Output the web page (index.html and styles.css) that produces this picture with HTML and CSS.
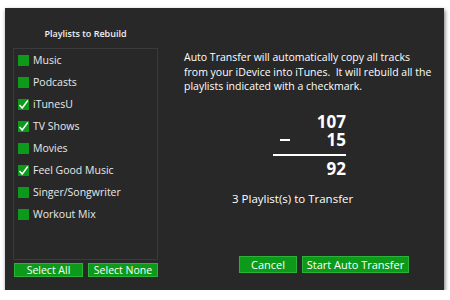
FILE: index.html
```html
<!DOCTYPE html>
<html>
<head>
<meta charset="utf-8">
<link rel="stylesheet" href="styles.css">
</head>
<body>
<div class="window">
  <div class="left">
    <div class="title">Playlists to Rebuild</div>
    <div class="list">
      <div class="item"><span class="box"></span>Music</div>
      <div class="item"><span class="box"></span>Podcasts</div>
      <div class="item"><span class="box"><svg viewBox="0 0 11 11"><polyline points="1.5,6 4.2,9 9.8,1.5"/></svg></span>iTunesU</div>
      <div class="item"><span class="box"><svg viewBox="0 0 11 11"><polyline points="1.5,6 4.2,9 9.8,1.5"/></svg></span>TV Shows</div>
      <div class="item"><span class="box"></span>Movies</div>
      <div class="item"><span class="box"><svg viewBox="0 0 11 11"><polyline points="1.5,6 4.2,9 9.8,1.5"/></svg></span>Feel Good Music</div>
      <div class="item"><span class="box"></span>Singer/Songwriter</div>
      <div class="item"><span class="box"></span>Workout Mix</div>
    </div>
    <div class="btnrow">
      <div class="btn sel-all">Select All</div>
      <div class="btn sel-none">Select None</div>
    </div>
  </div>
  <div class="right">
    <div class="desc">Auto Transfer will automatically copy all tracks from your iDevice into iTunes.&nbsp; It will rebuild all the playlists indicated with a checkmark.</div>
    <div class="calc">
      <div class="num">107</div>
      <div class="num minus-row"><span class="minus"></span>15</div>
      <div class="rule"></div>
      <div class="num">92</div>
    </div>
    <div class="count">3 Playlist(s) to Transfer</div>
    <div class="actions">
      <div class="btn cancel">Cancel</div>
      <div class="btn start">Start Auto Transfer</div>
    </div>
  </div>
</div>
</body>
</html>
```
FILE: styles.css
```css
html, body {
  margin: 0;
  padding: 0;
  background: #ffffff;
}
body {
  font-family: "Open Sans", "Noto Sans", sans-serif;
  color: #ffffff;
}
.window {
  margin: 8px 0 0 5px;
  width: 439px;
  height: 282px;
  background: #282828;
  box-shadow: 1px 2px 4px rgba(0,0,0,0.55);
  display: flex;
  box-sizing: border-box;
  padding: 0 8px;
}
.left {
  width: 145px;
  display: flex;
  flex-direction: column;
}
.title {
  padding-top: 20px;
  height: 12px;
  line-height: 12px;
  margin-bottom: 8px;
  text-align: center;
  font-size: 9px;
  font-weight: 600;
  color: #f0f0f0;
}
.list {
  height: 212px;
  box-sizing: border-box;
  border: 1px solid #3a3a3a;
  padding: 0 4px;
}
.item {
  height: 22px;
  display: flex;
  align-items: center;
  font-size: 10.5px;
  color: #e8e8e8;
}
.box {
  width: 11px;
  height: 11px;
  background: #0d9a1b;
  margin-right: 4px;
  flex: none;
  display: flex;
}
.box svg {
  width: 11px;
  height: 11px;
}
.box polyline {
  fill: none;
  stroke: #ffffff;
  stroke-width: 1.5;
}
.btnrow {
  display: flex;
  gap: 5px;
  margin-top: 3px;
  padding-left: 1px;
}
.btn {
  background: #0d9a1b;
  border: 1px solid #2bb238;
  box-sizing: border-box;
  color: #ffffff;
  text-align: center;
  font-size: 10.5px;
  display: flex;
  align-items: center;
  justify-content: center;
}
.sel-all { width: 69px; height: 14px; }
.sel-none { width: 70px; height: 14px; }
.right {
  padding-left: 26px;
  display: flex;
  flex-direction: column;
}
.desc {
  margin-top: 42px;
  width: 250px;
  font-size: 10.5px;
  line-height: 14.5px;
}
.calc {
  margin-top: 19px;
  margin-left: 89px;
  width: 73px;
}
.num {
  height: 18px;
  line-height: 18px;
  text-align: right;
  font-size: 17px;
  font-weight: 700;
  position: relative;
}
.minus {
  position: absolute;
  left: 7px;
  top: 8px;
  width: 10px;
  height: 2px;
  background: #ffffff;
}
.rule {
  height: 2px;
  background: #ffffff;
  margin: 5px 0 4px;
}
.count {
  margin-top: 13px;
  margin-left: 48px;
  line-height: 16px;
  font-size: 11.5px;
}
.actions {
  display: flex;
  gap: 5px;
  margin-top: 49px;
  margin-left: 55px;
}
.cancel { width: 58px; height: 17px; font-size: 11px; }
.start { width: 107px; height: 17px; font-size: 11px; }
```
